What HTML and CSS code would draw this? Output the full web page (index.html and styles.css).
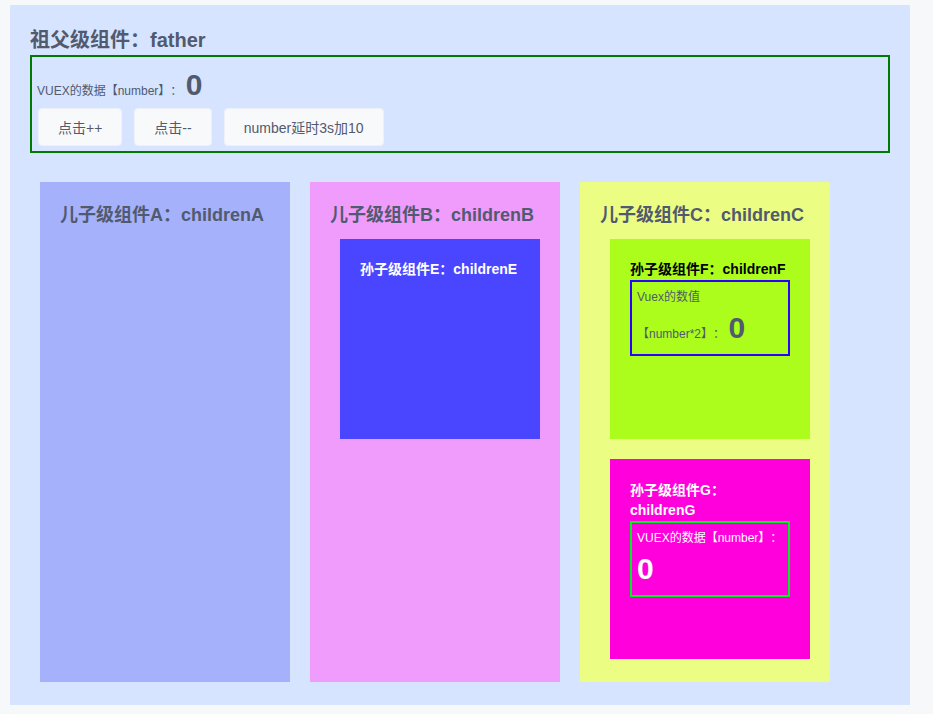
FILE: index.html
```html
<!DOCTYPE html>
<html lang="zh-CN">
<head>
<meta charset="utf-8">
<title>Vuex 组件通信</title>
<link rel="stylesheet" href="styles.css">
</head>
<body>
<div class="father">
  <h2 class="father-title">祖父级组件：father</h2>
  <div class="father-box">
    <div class="store-line"><span class="label">VUEX的数据【number】：</span> <span class="num">0</span></div>
    <div class="btns">
      <button class="btn">点击++</button>
      <button class="btn">点击--</button>
      <button class="btn">number延时3s加10</button>
    </div>
  </div>
  <div class="children">
    <div class="child child-a">
      <h3 class="child-title">儿子级组件A：childrenA</h3>
    </div>
    <div class="child child-b">
      <h3 class="child-title">儿子级组件B：childrenB</h3>
      <div class="grand grand-e">
        <h4 class="grand-title">孙子级组件E：childrenE</h4>
      </div>
    </div>
    <div class="child child-c">
      <h3 class="child-title">儿子级组件C：childrenC</h3>
      <div class="grand grand-f">
        <h4 class="grand-title">孙子级组件F：childrenF</h4>
        <div class="vbox vbox-blue"><span class="label">Vuex的数值【number*2】：</span> <span class="num">0</span></div>
      </div>
      <div class="grand grand-g">
        <h4 class="grand-title">孙子级组件G：childrenG</h4>
        <div class="vbox vbox-lime"><span class="label">VUEX的数据【number】：</span> <span class="num">0</span></div>
      </div>
    </div>
  </div>
</div>
</body>
</html>
```
FILE: styles.css
```css
* { box-sizing: border-box; }
html, body { margin: 0; padding: 0; }
body {
  background: #f7f8fa;
  font-family: "Liberation Sans", "Noto Sans CJK SC", sans-serif;
  color: #515a6e;
  text-spacing-trim: space-all;
}
.father {
  margin: 5px 0 0 10px;
  width: 900px;
  height: 700px;
  padding: 0 20px;
  background: #d6e4ff;
  overflow: hidden;
}
.father-title {
  margin: 0;
  padding-top: 20px;
  font-size: 20px;
  line-height: 30px;
  font-weight: bold;
  color: #515a6e;
}
.father-box {
  border: 2px solid #007a00;
  padding: 7px 5px 5px 5px;
  font-size: 12px;
  line-height: 20px;
}
.label { color: #515a6e; font-size: 12px; }
.num {
  font-size: 30px;
  line-height: 42px;
  font-weight: bold;
  color: #515a6e;
}
.btns {
  display: flex;
  gap: 12px;
  margin: 2px 0 0 1px;
}
.btn {
  height: 38px;
  padding: 0 19px;
  font-family: "Liberation Sans", "Noto Sans CJK SC", sans-serif;
  font-size: 14px;
  color: #515a6e;
  background: #f8f9fb;
  border: 1px solid #eef1f6;
  border-radius: 4px;
  text-spacing-trim: space-all;
}
.children {
  display: flex;
  margin-top: 19px;
}
.child {
  display: flex;
  flex-direction: column;
  width: 250px;
  height: 500px;
  margin: 10px;
  padding: 20px;
}
.child-a { background: #a6b1fb; }
.child-b { background: #ef9cfc; }
.child-c { background: #ebfd82; }
.child-title {
  margin: 0;
  font-size: 18px;
  line-height: 27px;
  font-weight: bold;
  color: #515a6e;
}
.grand {
  flex: none;
  width: 200px;
  height: 200px;
  margin: 10px;
  padding: 20px;
}
.grand-e { background: #4a46ff; }
.grand-f { background: #acfd1c; }
.grand-g { background: #ff00dd; }
.grand-title {
  margin: 0;
  font-size: 14px;
  line-height: 20px;
  font-weight: bold;
  color: #ffffff;
}
.grand-f .grand-title { color: #000000; margin-bottom: 1px; }
.grand-g .grand-title { padding-top: 1px; margin-bottom: 1px; }
.vbox {
  padding: 5px 3px 5px 5px;
  font-size: 12px;
  line-height: 20px;
}
.vbox-blue { border: 2px solid #2a00ff; }
.vbox-lime { border: 2px solid #00f020; }
.vbox-lime .label, .vbox-lime .num { color: #ffffff; }
```
